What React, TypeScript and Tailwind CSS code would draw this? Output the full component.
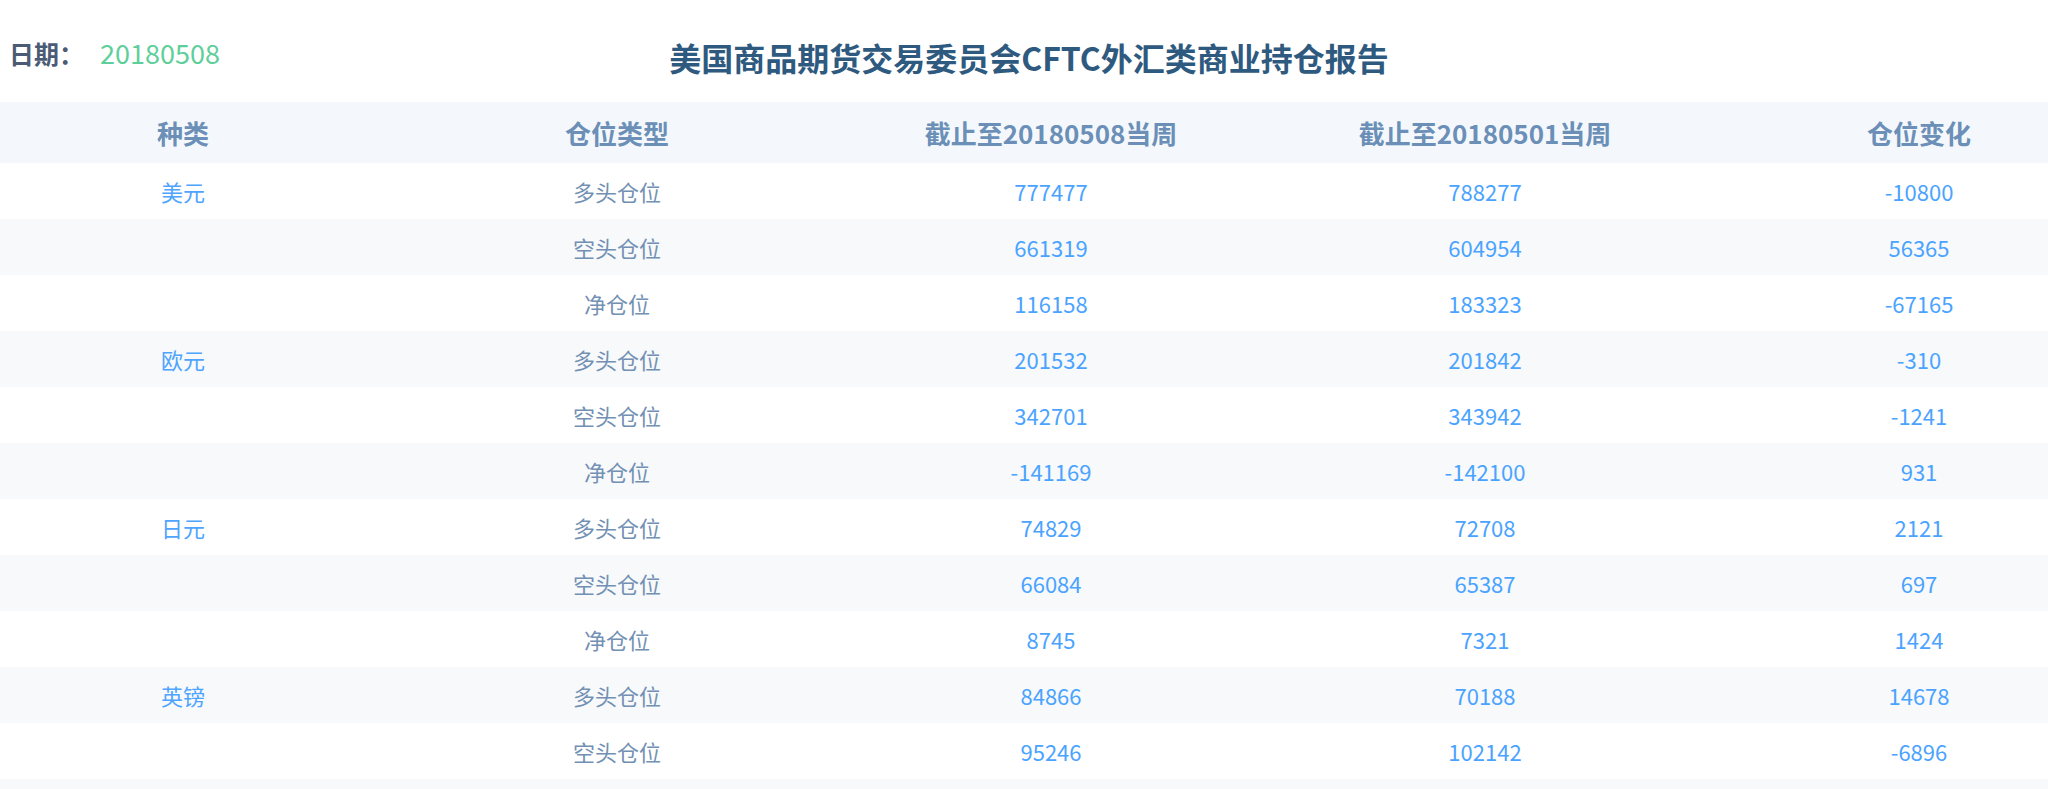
const rows = [
  { kind: '美元', type: '多头仓位', cur: '777477', prev: '788277', diff: '-10800' },
  { kind: '', type: '空头仓位', cur: '661319', prev: '604954', diff: '56365' },
  { kind: '', type: '净仓位', cur: '116158', prev: '183323', diff: '-67165' },
  { kind: '欧元', type: '多头仓位', cur: '201532', prev: '201842', diff: '-310' },
  { kind: '', type: '空头仓位', cur: '342701', prev: '343942', diff: '-1241' },
  { kind: '', type: '净仓位', cur: '-141169', prev: '-142100', diff: '931' },
  { kind: '日元', type: '多头仓位', cur: '74829', prev: '72708', diff: '2121' },
  { kind: '', type: '空头仓位', cur: '66084', prev: '65387', diff: '697' },
  { kind: '', type: '净仓位', cur: '8745', prev: '7321', diff: '1424' },
  { kind: '英镑', type: '多头仓位', cur: '84866', prev: '70188', diff: '14678' },
  { kind: '', type: '空头仓位', cur: '95246', prev: '102142', diff: '-6896' },
  { kind: '', type: '净仓位', cur: '-10380', prev: '-31954', diff: '21574' },
]

const cols = 'grid grid-cols-[400px_434px_434px_434px_434px] w-[2136px]'

export default function App() {
  return (
    <div
      className="w-full h-[789px] overflow-hidden bg-white"
      style={{ fontFamily: '"Noto Sans CJK SC", "Noto Sans", sans-serif' }}
    >
      {/* Top: date + title */}
      <div className="grid grid-cols-[1fr_auto_1fr] h-[102px]">
        <div className="flex items-center gap-[16px] pl-[9px] pt-[36px] self-start">
          <span className="text-[25px] leading-[34px] font-bold text-[#4c5b75]">日期：</span>
          <span className="text-[27px] leading-[34px] text-[#5ecf9a]">20180508</span>
        </div>
        <h1 className="pt-[36px] pl-[10px] text-[32px] leading-[42px] font-bold text-[#2f5a80]">
          美国商品期货交易委员会CFTC外汇类商业持仓报告
        </h1>
        <div />
      </div>

      {/* Table */}
      <div className="w-full overflow-hidden">
        <div className={`${cols} h-[61px] items-center bg-[#f4f8fc] text-[26px] font-bold text-[#6b8fb7] text-center`}>
          <div className="pr-[34px]">种类</div>
          <div>仓位类型</div>
          <div>截止至20180508当周</div>
          <div>截止至20180501当周</div>
          <div>仓位变化</div>
        </div>
        {rows.map((r, i) => (
          <div
            key={i}
            className={`${cols} h-[56px] items-center text-[22px] text-center ${i % 2 === 1 ? 'bg-[#f7f9fb]' : 'bg-white'}`}
          >
            <div className="pr-[34px] text-[#4ea4ff]">{r.kind}</div>
            <div className="text-[#7290b3]">{r.type}</div>
            <div className="text-[#4aa3ff]">{r.cur}</div>
            <div className="text-[#4aa3ff]">{r.prev}</div>
            <div className="text-[#4aa3ff]">{r.diff}</div>
          </div>
        ))}
      </div>
    </div>
  )
}
